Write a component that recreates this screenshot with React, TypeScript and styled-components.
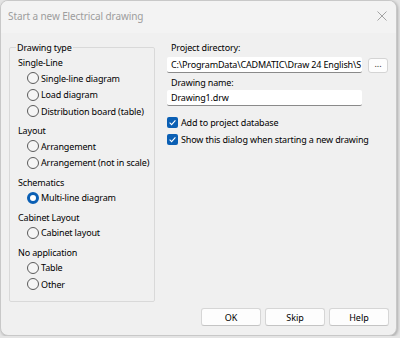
import styled, { createGlobalStyle } from "styled-components";

const GlobalStyle = createGlobalStyle`
  html, body {
    margin: 0;
    padding: 0;
    background: #e4e4e4;
  }
  body {
    font-family: "Noto Sans", "Open Sans", sans-serif;
    font-size: 9px;
    letter-spacing: -0.15px;
    color: #000000;
  }
`;

const Window = styled.div`
  box-sizing: border-box;
  width: 397px;
  height: 336px;
  border: 1px solid #c8c8c8;
  border-radius: 8px;
  background: #f0f0f0;
  display: flex;
  flex-direction: column;
  overflow: hidden;
  box-shadow: 1px 1px 3px rgba(0, 0, 0, 0.25);
`;

const TitleBar = styled.div`
  height: 30px;
  flex: none;
  display: flex;
  align-items: center;
  justify-content: space-between;
  padding: 0 8px 2px 7px;
  background: #f3f3f3;
`;

const Title = styled.span`
  font-size: 10px;
  letter-spacing: -0.1px;
  color: #9d9d9d;
`;

const CloseButton = styled.button`
  border: 0;
  background: none;
  padding: 0;
  width: 12px;
  height: 12px;
  display: flex;
  align-items: center;
  justify-content: center;
`;

const Main = styled.div`
  flex: 1;
  display: flex;
  align-items: flex-start;
  gap: 12px;
  padding: 7px 8px 0 8px;
`;

const GroupBox = styled.fieldset`
  box-sizing: border-box;
  width: 147px;
  margin: 0;
  padding: 0 6px 8px 8px;
  border: 1px solid #d9d9d9;
  border-radius: 2px;
  min-width: 0;
`;

const Caption = styled.legend`
  padding: 0 1px;
  margin-left: -2px;
  line-height: 15px;
`;

const Section = styled.div`
  display: flex;
  flex-direction: column;
  & + & {
    margin-top: 3.5px;
  }
`;

const SectionLabel = styled.div`
  line-height: 15px;
  height: 15px;
  white-space: nowrap;
`;

const RadioRow = styled.label`
  display: flex;
  align-items: center;
  height: 16.5px;
  padding-left: 9px;
  gap: 2px;
  white-space: nowrap;
`;

const RadioDot = styled.span<{ $on?: boolean }>`
  box-sizing: border-box;
  width: 12px;
  height: 12px;
  border-radius: 50%;
  flex: none;
  border: ${(p) => (p.$on ? "3px solid #0a5fb4" : "1px solid #5a5a5a")};
  background: ${(p) => (p.$on ? "#ffffff" : "#f5f5f5")};
`;

const Side = styled.div`
  display: flex;
  flex-direction: column;
`;

const FieldLabel = styled.div<{ $first?: boolean }>`
  line-height: 15px;
  padding-left: 4px;
  margin-top: ${(p) => (p.$first ? "0" : "2px")};
`;

const FieldRow = styled.div<{ $tight?: boolean }>`
  display: flex;
  align-items: center;
  gap: 6px;
  margin-top: ${(p) => (p.$tight ? "0" : "2px")};
`;

const TextBox = styled.div`
  box-sizing: border-box;
  width: 195px;
  height: 16px;
  background: #ffffff;
  border-bottom: 1px solid #8a8a8a;
  border-radius: 2px;
  padding: 0 4px;
  line-height: 15px;
  white-space: nowrap;
  overflow: hidden;
`;

const SmallButton = styled.button`
  box-sizing: border-box;
  width: 20px;
  height: 15px;
  border: 1px solid #d4d4d4;
  border-radius: 3px;
  background: #fdfdfd;
  font: inherit;
  padding: 0 0 4px;
  line-height: 10px;
  color: #333;
`;

const Checks = styled.div`
  display: flex;
  flex-direction: column;
  gap: 2px;
  margin-top: 9px;
`;

const CheckRow = styled.label`
  display: flex;
  align-items: center;
  gap: 3px;
  height: 15px;
  white-space: nowrap;
`;

const CheckBox = styled.span`
  width: 11px;
  height: 11px;
  border-radius: 2px;
  background: #0a5fb4;
  display: flex;
  align-items: center;
  justify-content: center;
  flex: none;
`;

const Footer = styled.div`
  flex: none;
  display: flex;
  justify-content: flex-end;
  gap: 4px;
  padding: 0 7px 9px 0;
`;

const DialogButton = styled.button`
  box-sizing: border-box;
  width: 60px;
  height: 18px;
  border: 1px solid #d6d6d6;
  border-bottom-color: #c4c4c4;
  border-radius: 3px;
  background: #fdfdfd;
  font: inherit;
  color: #000000;
  padding: 0;
`;

const sections = [
  { title: "Single-Line", items: ["Single-line diagram", "Load diagram", "Distribution board (table)"] },
  { title: "Layout", items: ["Arrangement", "Arrangement (not in scale)"] },
  { title: "Schematics", items: ["Multi-line diagram"] },
  { title: "Cabinet Layout", items: ["Cabinet layout"] },
  { title: "No application", items: ["Table", "Other"] },
];

const Tick = () => (
  <svg width="9" height="9" viewBox="0 0 9 9">
    <path d="M1.6 4.7 L3.6 6.6 L7.4 2.4" fill="none" stroke="#fff" strokeWidth="1.1" />
  </svg>
);

export default function App() {
  return (
    <>
      <GlobalStyle />
      <Window>
        <TitleBar>
          <Title>Start a new Electrical drawing</Title>
          <CloseButton aria-label="Close">
            <svg width="10" height="10" viewBox="0 0 10 10">
              <path d="M0.5 0.5 L9.5 9.5 M9.5 0.5 L0.5 9.5" stroke="#9a9a9a" strokeWidth="0.9" />
            </svg>
          </CloseButton>
        </TitleBar>
        <Main>
          <GroupBox>
            <Caption>Drawing type</Caption>
            {sections.map((s) => (
              <Section key={s.title}>
                <SectionLabel>{s.title}</SectionLabel>
                {s.items.map((it) => (
                  <RadioRow key={it}>
                    <RadioDot $on={it === "Multi-line diagram"} />
                    {it}
                  </RadioRow>
                ))}
              </Section>
            ))}
          </GroupBox>
          <Side>
            <FieldLabel $first>Project directory:</FieldLabel>
            <FieldRow>
              <TextBox>C:\ProgramData\CADMATIC\Draw 24 English\S</TextBox>
              <SmallButton>...</SmallButton>
            </FieldRow>
            <FieldLabel>Drawing name:</FieldLabel>
            <FieldRow $tight>
              <TextBox>Drawing1.drw</TextBox>
            </FieldRow>
            <Checks>
              <CheckRow>
                <CheckBox>
                  <Tick />
                </CheckBox>
                Add to project database
              </CheckRow>
              <CheckRow>
                <CheckBox>
                  <Tick />
                </CheckBox>
                Show this dialog when starting a new drawing
              </CheckRow>
            </Checks>
          </Side>
        </Main>
        <Footer>
          <DialogButton>OK</DialogButton>
          <DialogButton>Skip</DialogButton>
          <DialogButton>Help</DialogButton>
        </Footer>
      </Window>
    </>
  );
}
